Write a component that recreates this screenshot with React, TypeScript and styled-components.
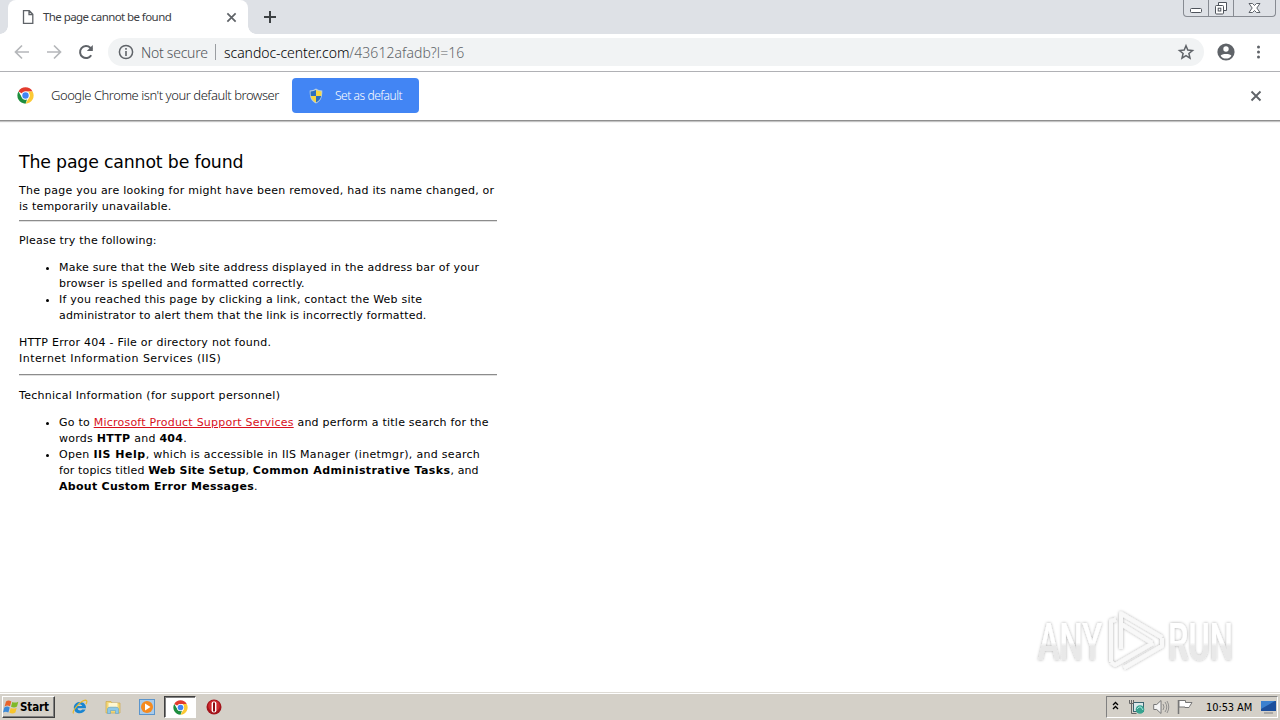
import React from "react";
import styled, { createGlobalStyle } from "styled-components";

const GlobalStyle = createGlobalStyle`
  * { box-sizing: border-box; }
  html, body { margin: 0; padding: 0; }
  body { background: #fff; overflow: hidden; }
  svg { display: block; flex: none; overflow: visible; }
`;

const ui = `"Noto Sans", "Open Sans", sans-serif`;
const verdana = `"DejaVu Sans", sans-serif`;

const Screen = styled.div`
  width: 1280px;
  height: 720px;
  display: flex;
  flex-direction: column;
  background: #fff;
  position: relative;
  overflow: hidden;
`;

const TabStrip = styled.div`
  height: 34px;
  background: #dee1e6;
  display: flex;
  align-items: flex-start;
  padding-left: 8px;
  flex: none;
`;

const Tab = styled.div`
  position: relative;
  width: 240px;
  height: 34px;
  background: #fff;
  border-radius: 8px 8px 0 0;
  display: flex;
  align-items: center;
  padding: 0 11px 0 14px;
  &::before, &::after {
    content: "";
    position: absolute;
    bottom: 0;
    width: 8px;
    height: 8px;
  }
  &::before { left: -8px; background: radial-gradient(circle at 0 0, transparent 7.5px, #fff 8px); }
  &::after { right: -8px; background: radial-gradient(circle at 100% 0, transparent 7.5px, #fff 8px); }
`;

const UiText = styled.span<{ $size: number; $color: string; $weight?: number; $spacing?: number }>`
  font-family: ${ui};
  font-size: ${p => p.$size}px;
  color: ${p => p.$color};
  font-weight: ${p => p.$weight ?? 400};
  letter-spacing: ${p => p.$spacing ?? 0}px;
  white-space: nowrap;
`;

const TabTitle = styled(UiText)`
  margin: -2px 0 0 9px;
  flex: 1;
`;

const NewTab = styled.div`
  margin: 10px 0 0 15px;
`;

const WindowButtons = styled.div`
  margin-left: auto;
  margin-right: 4px;
  display: flex;
  height: 17px;
  width: 93px;
  border: 1px solid #878b92;
  border-top: 0;
  border-radius: 0 0 4px 4px;
`;

const WindowButton = styled.div<{ $width: number }>`
  width: ${p => p.$width}px;
  display: flex;
  justify-content: center;
  & + & { border-left: 1px solid #878b92; }
`;

const Toolbar = styled.div`
  height: 38px;
  flex: none;
  border-bottom: 1px solid #b0b1b5;
  display: flex;
  align-items: center;
  padding: 0 12px 1px 13px;
`;

const NavButtons = styled.div`
  display: flex;
  gap: 14px;
`;

const Omnibox = styled.div`
  height: 28px;
  width: 1096px;
  margin-left: 13px;
  border-radius: 14px;
  background: #f1f3f4;
  display: flex;
  align-items: center;
  padding: 0 9px 0 10px;
`;

const SecurityLabel = styled(UiText)`
  margin-left: 7px;
  width: 67px;
`;

const Separator = styled.div`
  width: 1px;
  height: 16px;
  margin: 0 8px 0 7px;
  background: #9a9da1;
`;

const Address = styled.div`
  flex: 1;
  display: flex;
`;

const ToolbarEnd = styled.div`
  display: flex;
  align-items: center;
  margin-left: 12px;
  gap: 14px;
`;

const InfoBar = styled.div`
  height: 49px;
  flex: none;
  display: flex;
  align-items: center;
  padding: 0 18px 1px 17px;
  border-bottom: 1px solid #8f8f8f;
  box-shadow: 0 1px 1px #c4c4c4;
`;

const InfoMessage = styled(UiText)`
  width: 241px;
  margin: -1px 0 0 17px;
`;

const DefaultButton = styled.div`
  width: 127px;
  height: 35px;
  background: #4285f4;
  border-radius: 4px;
  display: flex;
  align-items: center;
  padding-left: 17px;
  gap: 12px;
`;

const CloseInfo = styled.div`
  margin-left: auto;
`;

const Page = styled.main`
  flex: 1;
  padding: 31px 0 0 19px;
  font-family: ${verdana};
  font-size: 11px;
  line-height: 16px;
  color: #000;
`;

const Article = styled.div`
  width: 478px;
`;

const Heading = styled.h1`
  margin: 0 0 11px;
  font-size: 17.33px;
  line-height: 20px;
  font-weight: 400;
  letter-spacing: -0.17px;
  white-space: nowrap;
`;

const Line = styled.span<{ $spacing: number }>`
  display: block;
  white-space: nowrap;
  letter-spacing: ${p => p.$spacing}px;
`;

const Strong = styled.b<{ $spacing: number }>`
  letter-spacing: ${p => p.$spacing}px;
`;

const Rule = styled.hr<{ $above: number; $below: number }>`
  height: 2px;
  border: 0;
  border-top: 1px solid #8c8c8c;
  border-bottom: 1px solid #e0e0e0;
  margin: ${p => p.$above}px 0 ${p => p.$below}px;
`;

const Paragraph = styled.p`
  margin: 0;
`;

const List = styled.ul`
  margin: 11px 0;
  padding: 0 0 0 40px;
`;

const Link = styled.a`
  color: #d8101c;
  text-decoration: underline;
`;

const Watermark = styled.div`
  position: absolute;
  left: 1030px;
  top: 604px;
`;

const Taskbar = styled.footer`
  height: 28px;
  flex: none;
  background: #d4d0c8;
  border-top: 1px solid #dedbd5;
  box-shadow: inset 0 1px 0 #fff;
  display: flex;
  align-items: center;
  padding: 1px 2px 0 2px;
  font-family: ${verdana};
`;

const StartButton = styled.div`
  height: 22px;
  width: 53px;
  display: flex;
  align-items: center;
  border: 1px solid;
  border-color: #fff #404040 #404040 #fff;
  box-shadow: inset -1px -1px 0 #808080;
  font-family: "DejaVu Sans Condensed", "DejaVu Sans", sans-serif;
  font-stretch: condensed;
  font-weight: 700;
  font-size: 11.5px;
  letter-spacing: -0.1px;
`;

const Launchers = styled.div`
  display: flex;
  align-items: center;
  margin-left: 17px;
  gap: 17px;
`;

const ActiveTask = styled.div`
  width: 32px;
  height: 22px;
  margin: 0 -7px 0 -8px;
  display: flex;
  align-items: center;
  justify-content: center;
  background: #fff;
  border: 1px solid;
  border-color: #404040 #fff #fff #404040;
  box-shadow: inset 1px 1px 0 #808080;
`;

const Tray = styled.div`
  margin-left: auto;
  width: 172px;
  height: 22px;
  display: flex;
  align-items: center;
  padding: 0 1px 0 5px;
  border: 1px solid;
  border-color: #808080 #fff #fff #808080;
`;

const TrayIcons = styled.div`
  display: flex;
  align-items: center;
  gap: 8px;
`;

const Clock = styled.span`
  margin-left: 13px;
  width: 54px;
  font-family: "DejaVu Sans Condensed", "DejaVu Sans", sans-serif;
  font-stretch: condensed;
  font-size: 11px;
  letter-spacing: -0.1px;
  white-space: nowrap;
`;

const ChromeLogo = ({ size }: { size: number }) => (
  <svg width={size} height={size} viewBox="0 0 48 48">
    <circle cx="24" cy="24" r="23" fill="#fff" />
    <path d="M24 1a23 23 0 0 1 19.9 11.5H24A11.5 11.5 0 0 0 14 18.2L4.1 12.5A23 23 0 0 1 24 1Z" fill="#e33b2e" />
    <path d="M43.9 12.5A23 23 0 0 1 24 47l10-17.3a11.5 11.5 0 0 0 0-11.5l-3-5.7Z" fill="#fcc934" />
    <path d="M4.1 12.5 14 29.7a11.5 11.5 0 0 0 14.5 5L24 47A23 23 0 0 1 4.1 12.5Z" fill="#1e8e3e" />
    <circle cx="24" cy="24" r="11.5" fill="#fff" />
    <circle cx="24" cy="24" r="9" fill="#4285f4" />
  </svg>
);

const Cross = ({ size, color }: { size: number; color: string }) => (
  <svg width={size} height={size} viewBox="0 0 12 12">
    <path d="M1.5 1.5l9 9M10.5 1.5l-9 9" stroke={color} strokeWidth="1.9" />
  </svg>
);

const Shield = () => (
  <svg width="14" height="16" viewBox="0 0 14 16">
    <path d="M7 .5C5.3 1.8 3.2 2.4.7 2.4.6 8.6 1.8 13 7 15.5 12.2 13 13.4 8.6 13.3 2.4 10.8 2.4 8.7 1.8 7 .5Z" fill="#b9cfdf" />
    <path d="M7 2v6H1.800c-.2-1.500-.3-3-.2-4.600C3.600 3.300 5.400 2.900 7 2Z" fill="#2c6fc0" />
    <path d="M7 2v6h5.200c.2-1.500.3-3 .2-4.600C10.400 3.300 8.600 2.900 7 2Z" fill="#f6d743" />
    <path d="M7 8v6.500C4.100 13 2.400 11 1.800 8Z" fill="#f6d743" />
    <path d="M7 8v6.500c2.900-1.500 4.600-3.500 5.200-6.500Z" fill="#2c6fc0" />
  </svg>
);

const BrowserTop = () => (
  <>
    <TabStrip>
      <Tab>
        <svg width="12" height="14" viewBox="0 0 12 14">
          <path d="M1.500.700h5.800l3.500 3.500v9.100H1.500ZM7 .7v3.800h3.800" fill="none" stroke="#5f6368" strokeWidth="1.300" />
        </svg>
        <TabTitle $size={11.5} $color="#3c4043" $spacing={-0.58}>The page cannot be found</TabTitle>
        <Cross size={11} color="#5f6368" />
      </Tab>
      <NewTab>
        <svg width="14" height="14" viewBox="0 0 14 14"><path d="M7 1v12M1 7h12" stroke="#3c4043" strokeWidth="2" /></svg>
      </NewTab>
      <WindowButtons>
        <WindowButton $width={24}>
          <svg width="14" height="16" viewBox="0 0 14 16"><rect x="1.500" y="8.500" width="11" height="4" rx="1" fill="#fff" stroke="#4e535b" /></svg>
        </WindowButton>
        <WindowButton $width={25}>
          <svg width="14" height="16" viewBox="0 0 14 16" fill="#fff" stroke="#4e535b">
            <path d="M4.500 2.500h8v8h-8Z" /><rect x="1.500" y="5.500" width="8" height="8.500" rx="1" /><rect x="4.200" y="8.200" width="2.600" height="2.800" />
          </svg>
        </WindowButton>
        <WindowButton $width={42}>
          <svg width="13" height="16" viewBox="0 0 13 16">
            <path d="M1 3.500h3.500l2 2 2-2H12L8.800 8l3.200 4.500H8.500l-2-2-2 2H1L4.200 8Z" fill="#fff" stroke="#4e535b" strokeWidth=".9" />
          </svg>
        </WindowButton>
      </WindowButtons>
    </TabStrip>
    <Toolbar>
      <NavButtons>
        <svg width="18" height="18" viewBox="0 0 18 18" fill="none" stroke="#b5b7ba" strokeWidth="1.700"><path d="M16 9H3M9 2.500 2.500 9 9 15.500" /></svg>
        <svg width="18" height="18" viewBox="0 0 18 18" fill="none" stroke="#b5b7ba" strokeWidth="1.700"><path d="M2 9h13M9 2.500 15.500 9 9 15.500" /></svg>
        <svg width="18" height="18" viewBox="0 0 18 18"><path d="M14.200 12.200A6 6 0 1 1 13.300 4.800L15 6.500" fill="none" stroke="#5f6368" strokeWidth="2" /><path d="M15.800 2v6H9.800Z" fill="#5f6368" /></svg>
      </NavButtons>
      <Omnibox>
        <svg width="16" height="16" viewBox="0 0 16 16">
          <circle cx="8" cy="8" r="6.600" fill="none" stroke="#5f6368" strokeWidth="1.500" />
          <path d="M8 7v5M8 4v1.700" stroke="#5f6368" strokeWidth="1.600" />
        </svg>
        <SecurityLabel $size={14} $color="#4f5358" $weight={300} $spacing={-0.25}>Not secure</SecurityLabel>
        <Separator />
        <Address>
          <UiText $size={14} $color="#000" $weight={300} $spacing={-0.05}>scandoc-center.com</UiText>
          <UiText $size={14} $color="#606468" $weight={300} $spacing={0.05}>/43612afadb?l=16</UiText>
        </Address>
        <svg width="18" height="18" viewBox="0 0 18 18"><path d="m9 2.800 1.800 4.300 4.700.4-3.600 3 1.100 4.600L9 12.700l-4 2.400 1.100-4.600-3.600-3 4.700-.4Z" fill="none" stroke="#5f6368" strokeWidth="1.500" /></svg>
      </Omnibox>
      <ToolbarEnd>
        <svg width="20" height="20" viewBox="0 0 20 20">
          <circle cx="10" cy="10" r="8.600" fill="#5f6368" />
          <circle cx="10" cy="7" r="2.700" fill="#fff" />
          <path d="M4.600 13.700c.8-2.300 9.900-2.400 10.800 0C14.200 15.600 12.200 16.600 10 16.600s-4.200-1-5.400-2.900Z" fill="#fff" />
        </svg>
        <svg width="18" height="18" viewBox="0 0 18 18" fill="#5f6368"><circle cx="8.500" cy="4" r="1.500" /><circle cx="8.500" cy="9" r="1.500" /><circle cx="8.500" cy="14" r="1.500" /></svg>
      </ToolbarEnd>
    </Toolbar>
    <InfoBar>
      <ChromeLogo size={17} />
      <InfoMessage $size={13} $color="#202124" $weight={300} $spacing={-0.46}>Google Chrome isn't your default browser</InfoMessage>
      <DefaultButton>
        <Shield />
        <UiText $size={12} $color="#fff" $weight={300} $spacing={-0.45}>Set as default</UiText>
      </DefaultButton>
      <CloseInfo><Cross size={12} color="#5f6368" /></CloseInfo>
    </InfoBar>
  </>
);

const ErrorPage = () => (
  <Page>
    <Article>
      <Heading>The page cannot be found</Heading>
      <Paragraph>
        <Line $spacing={0.25}>The page you are looking for might have been removed, had its name changed, or</Line>
        <Line $spacing={0.21}>is temporarily unavailable.</Line>
      </Paragraph>
      <Rule $above={5} $below={11} />
      <Paragraph><Line $spacing={0.2}>Please try the following:</Line></Paragraph>
      <List>
        <li>
          <Line $spacing={0.235}>Make sure that the Web site address displayed in the address bar of your</Line>
          <Line $spacing={0.25}>browser is spelled and formatted correctly.</Line>
        </li>
        <li>
          <Line $spacing={0.215}>If you reached this page by clicking a link, contact the Web site</Line>
          <Line $spacing={0.17}>administrator to alert them that the link is incorrectly formatted.</Line>
        </li>
      </List>
      <Paragraph>
        <Line $spacing={0.275}>HTTP Error 404 - File or directory not found.</Line>
        <Line $spacing={0.455}>Internet Information Services (IIS)</Line>
      </Paragraph>
      <Rule $above={7} $below={12} />
      <Paragraph><Line $spacing={0.28}>Technical Information (for support personnel)</Line></Paragraph>
      <List>
        <li>
          <Line $spacing={0.23}>Go to <Link>Microsoft Product Support Services</Link> and perform a title search for the</Line>
          <Line $spacing={0.26}>words <b>HTTP</b> and <b>404</b>.</Line>
        </li>
        <li>
          <Line $spacing={0.3}>Open <Strong $spacing={0.5}>IIS Help</Strong>, which is accessible in IIS Manager (inetmgr), and search</Line>
          <Line $spacing={0.12}>for topics titled <Strong $spacing={0.14}>Web Site Setup</Strong>, <Strong $spacing={0.39}>Common Administrative Tasks</Strong>, and</Line>
          <Line $spacing={0.28}><b>About Custom Error Messages</b>.</Line>
        </li>
      </List>
    </Article>
  </Page>
);

const AnyRunMark = () => (
  <Watermark>
    <svg width="240" height="80" viewBox="0 0 240 80">
      <defs>
        <linearGradient id="fade" x1="0" y1="0" x2="0" y2="1">
          <stop offset=".5" stopColor="#fff" />
          <stop offset=".56" stopColor="#e9e9e9" />
        </linearGradient>
        <filter id="glow" x="-20%" y="-20%" width="140%" height="140%">
          <feDropShadow dx="0" dy="0" stdDeviation="1.500" floodColor="#000" floodOpacity=".34" />
        </filter>
      </defs>
      <g filter="url(#glow)">
        <g fill="url(#fade)" fontFamily="Roboto, sans-serif" fontSize="51" fontWeight="500">
          <text x="8" y="56" textLength="64" lengthAdjust="spacingAndGlyphs">ANY</text>
          <text x="138" y="56" textLength="65" lengthAdjust="spacingAndGlyphs">RUN</text>
        </g>
        <path d="M91 45V9.500l41 24M81 58V17l5-1.500M91 20l31 19M81 58l4 3 38-22M94 64l38-22V34" fill="none" stroke="#f8f8f8" strokeWidth="4" strokeLinejoin="round" />
      </g>
    </svg>
  </Watermark>
);

const Bar = () => (
  <Taskbar>
    <StartButton>
      <svg width="17" height="16" viewBox="0 0 17 16">
        <path d="M3 2.500C5 1 6.500 1.500 8.300 2.400L7 7.300C5.300 6.300 3.500 6.300 1.600 7.400Z" fill="#e9642b" />
        <path d="M9.300 2.900c2 1 3.700.9 6-.2L14 7.600c-2 1.200-4 1.100-6 .1Z" fill="#7fb928" />
        <path d="M1.300 8.400c2-1.100 3.600-1.100 5.400 0l-1.300 5c-2-1-3.500-1-5.400 0Z" fill="#3c8ad8" />
        <path d="M7.700 8.900c2 .9 3.800 1 6-.2l-1.300 4.900c-2.200 1.200-4 1.100-6 .1Z" fill="#f8c52c" />
      </svg>
      Start
    </StartButton>
    <Launchers>
      <svg width="16" height="16" viewBox="0 0 16 16">
        <path d="M14 9.300H5.600c.2 2.400 3.400 3 4.500 1.300h3.500C11.500 16 1.900 15.800 1.800 8.500 1.900 1.200 14.300.600 14 9.300ZM5.700 7h4.500C9.900 4.900 6.100 4.800 5.700 7Z" fill="#1985d1" fillRule="evenodd" />
        <path d="M1.500 14.500C-.5 12 8.500 1.500 13.500 1.200c2.200 0 1.200 2.800.5 4" fill="none" stroke="#e8b92c" strokeWidth="1.200" />
      </svg>
      <svg width="16" height="16" viewBox="0 0 16 16">
        <path d="M1 2.500h5l1 1.500h8v10H1Z" fill="#f2d675" stroke="#cda94a" strokeWidth=".7" />
        <path d="M3.500 4h9v4h-9Z" fill="#fff7d0" />
        <path d="M2.500 14.500V9.700Q3 8.200 5 8.200h6q2 0 2.500 1.500v4.800h-3v-3h-5v3Z" fill="#8cc8e8" stroke="#5ea2cc" strokeWidth=".6" />
      </svg>
      <svg width="17" height="16" viewBox="-1 0 17 16">
        <rect x=".5" y=".5" width="15" height="15" fill="#a9cbea" stroke="#5b95cc" />
        <circle cx="8" cy="8" r="6" fill="#f58a1f" /><path d="M6 4.500 11.500 8 6 11.500Z" fill="#fff" />
      </svg>
      <ActiveTask><ChromeLogo size={15} /></ActiveTask>
      <svg width="16" height="16" viewBox="0 0 16 16">
        <circle cx="8" cy="8" r="7.500" fill="#a3141b" /><circle cx="8" cy="7" r="5.800" fill="#cf2b30" />
        <rect x="5.600" y="2.500" width="4.800" height="11" rx="2" fill="#fff" /><rect x="7" y="3.500" width="2" height="9" fill="#8f0c12" />
      </svg>
    </Launchers>
    <Tray>
      <TrayIcons>
        <svg width="8" height="16" viewBox="0 0 8 16" fill="none" stroke="#000" strokeWidth="1.300"><path d="M1 6 3.500 3.500 6 6M1 10 3.500 7.500 6 10" /></svg>
        <svg width="16" height="16" viewBox="-1 0 16 16">
          <rect x="4.500" y="3.500" width="10" height="9" fill="#dbe8ea" stroke="#3b6470" /><circle cx="11" cy="10.500" r="4.300" fill="#36a38f" /><path d="M8 10q2-3 4-2l2 3" fill="none" stroke="#a9e1e0" />
          <path d="M.500 1v3.500h4V1M2.500 1v13.500h5" fill="none" stroke="#666" strokeWidth="1" />
        </svg>
        <svg width="16" height="16" viewBox="-1 0 16 16">
          <path d="M.7 5.500h3L8 1.500v13l-4.300-4h-3Z" fill="#f5f5f5" stroke="#777" /><path d="M10 5q2 3 0 6M12 3q3.500 5 0 10M14 2q3.500 6 0 12" fill="none" stroke="#888" strokeWidth=".9" />
        </svg>
        <svg width="17" height="16" viewBox="-1 0 17 16">
          <path d="M1.500 1v14" stroke="#777" strokeWidth="1.500" /><path d="M2 1.500h6.500v2H15l-2.500 4-.5 1H8V8H2Z" fill="#fff" stroke="#777" />
        </svg>
      </TrayIcons>
      <Clock>10:53 AM</Clock>
      <svg width="16" height="14" viewBox="-1 0 16 14">
        <rect x="0" y="1" width="15" height="10" fill="#1c4f9c" /><path d="M0 1h14L0 9Z" fill="#3b80cf" /><path d="M3 13h9" stroke="#9b9b9b" strokeWidth="1.500" />
      </svg>
    </Tray>
  </Taskbar>
);

export default function App() {
  return (
    <>
      <GlobalStyle />
      <Screen>
        <BrowserTop />
        <ErrorPage />
        <Bar />
        <AnyRunMark />
      </Screen>
    </>
  );
}
